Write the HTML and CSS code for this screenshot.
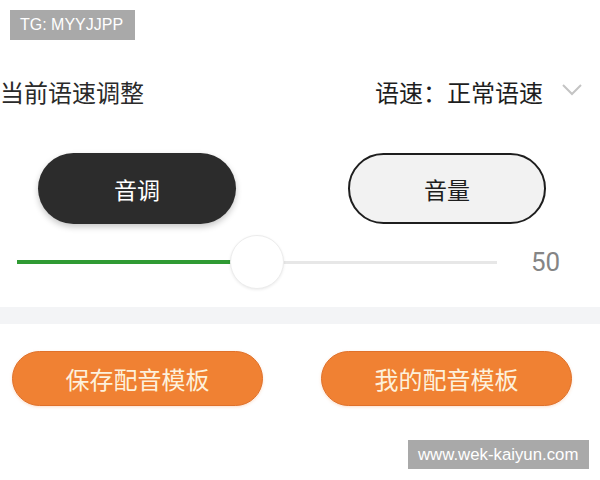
FILE: index.html
```html
<!DOCTYPE html>
<html lang="zh">
<head>
<meta charset="utf-8">
<title>语速调整</title>
<link rel="stylesheet" href="styles.css">
</head>
<body>
<div class="page">
  <div class="badge">TG: MYYJJPP</div>

  <div class="speed-row">
    <div class="title">当前语速调整</div>
    <div class="speed-select">
      <span class="speed-value">语速：正常语速</span>
      <svg class="chevron" width="20" height="12" viewBox="0 0 20 12">
        <polyline points="1,1 10,10 19,1" fill="none" stroke="#c4c4c4" stroke-width="2"/>
      </svg>
    </div>
  </div>

  <div class="tabs">
    <div class="tab tab-active">音调</div>
    <div class="tab tab-outline">音量</div>
  </div>

  <div class="slider-row">
    <div class="track">
      <div class="track-fill" style="width: 214px"></div>
      <div class="thumb" style="left: 213px"></div>
    </div>
    <div class="slider-value">50</div>
  </div>

  <div class="band"></div>

  <div class="actions">
    <div class="action">保存配音模板</div>
    <div class="action">我的配音模板</div>
  </div>

  <div class="watermark">www.wek-kaiyun.com</div>
</div>
</body>
</html>
```

FILE: styles.css
```css
html, body {
  margin: 0;
  padding: 0;
  background: #ffffff;
}

.page {
  position: relative;
  width: 600px;
  height: 480px;
  overflow: hidden;
  font-family: "Noto Sans CJK SC", "Noto Sans", sans-serif;
  color: #2a2a2a;
}

.badge {
  margin: 10px 0 0 10px;
  width: 125px;
  height: 30px;
  box-sizing: border-box;
  padding-left: 10px;
  background: #a9a9a9;
  color: #ffffff;
  font-family: "Liberation Sans", Arial, sans-serif;
  font-size: 16px;
  line-height: 30px;
}

.speed-row {
  margin-top: 37px;
  height: 30px;
  display: flex;
  align-items: center;
  justify-content: space-between;
  padding-right: 18px;
}

.title {
  font-size: 24px;
  line-height: 30px;
  color: #2a2a2a;
}

.speed-select {
  display: flex;
  align-items: center;
  gap: 19px;
}

.speed-value {
  font-size: 24px;
  line-height: 30px;
  color: #1e1e1e;
}

.chevron {
  display: block;
  margin-top: -4px;
}

.tabs {
  margin-top: 46px;
  display: flex;
  padding-left: 38px;
  gap: 112px;
}

.tab {
  width: 198px;
  height: 71px;
  box-sizing: border-box;
  border-radius: 36px;
  display: flex;
  align-items: center;
  justify-content: center;
  font-size: 23px;
  font-weight: 400;
}

.tab-active {
  background: #2c2c2c;
  color: #ffffff;
  box-shadow: 0 3px 6px rgba(0, 0, 0, 0.22);
}

.tab-outline {
  background: #f2f2f2;
  border: 2px solid #1e1e1e;
  color: #1e1e1e;
}

.slider-row {
  margin-top: 11px;
  height: 54px;
  display: flex;
  align-items: center;
  padding-left: 17px;
}

.track {
  position: relative;
  width: 480px;
  height: 3px;
  background: #e7e7e7;
}

.track-fill {
  position: absolute;
  left: 0;
  top: -0.5px;
  height: 4px;
  background: #2f9a33;
}

.thumb {
  position: absolute;
  top: -26px;
  width: 54px;
  height: 54px;
  box-sizing: border-box;
  border-radius: 50%;
  background: #ffffff;
  border: 1px solid #ececec;
  box-shadow: 0 1px 3px rgba(0, 0, 0, 0.08);
}

.slider-value {
  margin-left: 34px;
  font-family: Roboto, "Noto Sans", sans-serif;
  font-size: 26px;
  color: #858585;
  line-height: 30px;
}

.band {
  margin-top: 18px;
  height: 17px;
  background: #f3f4f6;
}

.actions {
  margin-top: 27px;
  display: flex;
  padding-left: 12px;
  gap: 58px;
}

.action {
  width: 251px;
  height: 55px;
  box-sizing: border-box;
  border-radius: 28px;
  background: #f08133;
  border: 1px solid #e0712a;
  color: #fdf1dc;
  font-size: 24px;
  display: flex;
  align-items: center;
  justify-content: center;
  box-shadow: 0 1px 3px rgba(240, 129, 51, 0.25);
}

.watermark {
  position: absolute;
  left: 408px;
  top: 440px;
  width: 181px;
  height: 29px;
  box-sizing: border-box;
  padding-left: 10px;
  background: #a9a9a9;
  color: #ffffff;
  font-family: "Liberation Sans", Arial, sans-serif;
  font-size: 16.8px;
  line-height: 29px;
}
```
